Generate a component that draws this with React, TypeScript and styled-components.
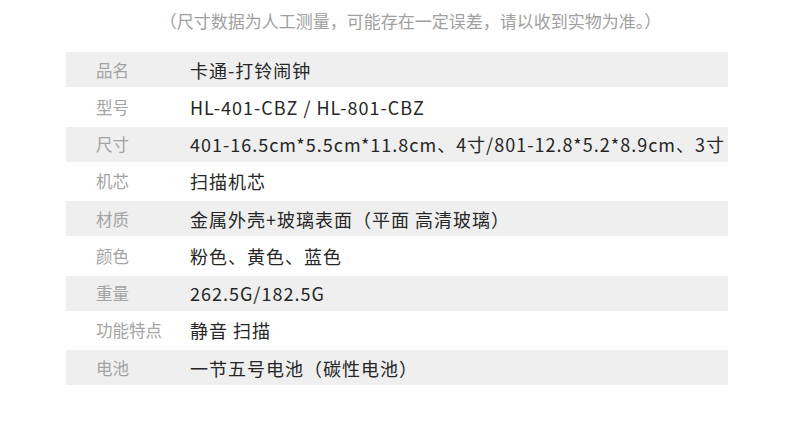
import styled, { createGlobalStyle } from "styled-components";

const GlobalStyle = createGlobalStyle`
  html, body {
    margin: 0;
    padding: 0;
    background: #fff;
  }
  body {
    font-family: "Noto Sans CJK SC", "Noto Sans", sans-serif;
  }
`;

const Page = styled.div`
  width: 790px;
  height: 421px;
  background: #fff;
  overflow: hidden;
`;

const Note = styled.div`
  height: 52px;
  padding-left: 31px;
  text-align: center;
  font-size: 17px;
  line-height: 42px;
  color: #a0a0a0;
  box-sizing: border-box;
  white-space: nowrap;
`;

const Table = styled.div`
  margin-left: 66px;
  width: 662px;
  display: flex;
  flex-direction: column;
`;

const Row = styled.div<{ $shaded: boolean }>`
  display: flex;
  align-items: center;
  height: ${(p) => (p.$shaded ? "35px" : "39.5px")};
  background: ${(p) => (p.$shaded ? "#efefef" : "#fff")};
`;

const Label = styled.div`
  flex: 0 0 124px;
  padding-left: 30px;
  box-sizing: border-box;
  font-size: 16.5px;
  color: #a3a3a3;
  white-space: nowrap;
`;

const Value = styled.div`
  font-size: 18px;
  letter-spacing: 1px;
  color: #262626;
  white-space: nowrap;
`;

const specs: [string, string][] = [
  ["品名", "卡通-打铃闹钟"],
  ["型号", "HL-401-CBZ / HL-801-CBZ"],
  ["尺寸", "401-16.5cm*5.5cm*11.8cm、4寸/801-12.8*5.2*8.9cm、3寸"],
  ["机芯", "扫描机芯"],
  ["材质", "金属外壳+玻璃表面（平面 高清玻璃）"],
  ["颜色", "粉色、黄色、蓝色"],
  ["重量", "262.5G/182.5G"],
  ["功能特点", "静音 扫描"],
  ["电池", "一节五号电池（碳性电池）"],
];

export default function App() {
  return (
    <Page>
      <GlobalStyle />
      <Note>（尺寸数据为人工测量，可能存在一定误差，请以收到实物为准。）</Note>
      <Table>
        {specs.map(([label, value], i) => (
          <Row key={label} $shaded={i % 2 === 0}>
            <Label>{label}</Label>
            <Value>{value}</Value>
          </Row>
        ))}
      </Table>
    </Page>
  );
}
